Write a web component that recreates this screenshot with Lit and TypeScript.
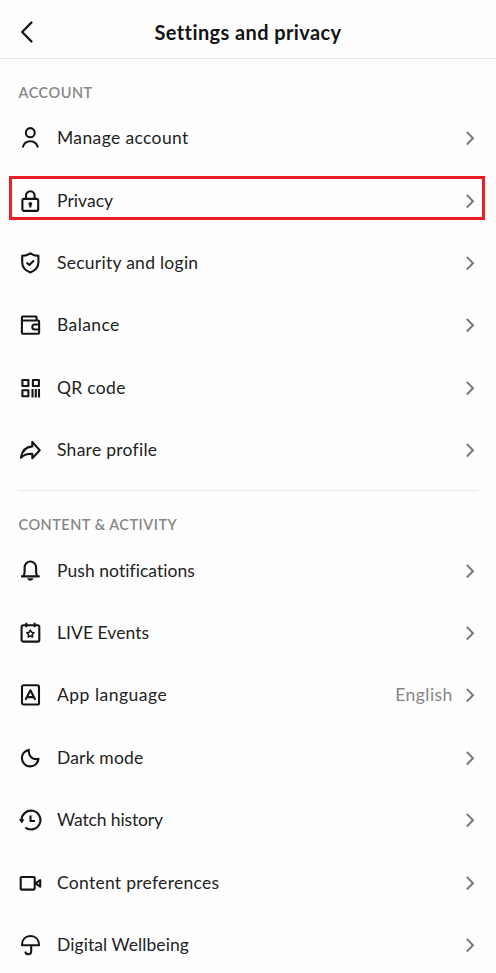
import { LitElement, html, svg, css, nothing, TemplateResult } from "lit";
import { customElement, property } from "lit/decorators.js";

const icons: Record<string, TemplateResult> = {
  person: svg`<ellipse cx="12.3" cy="6.7" rx="4.4" ry="4.6"/><path d="M4.7 21.6C5.7 17.5 8.5 15.3 12.3 15.3s6.6 2.2 7.6 6.3"/>`,
  lock: svg`<rect x="4.4" y="9.9" width="15.8" height="12" rx="1.6"/><path d="M8 9.8V6.5a4.3 4.3 0 0 1 8.6 0V9.8M12.3 15.3v3.2"/><circle class="fill" cx="12.3" cy="14.8" r="1.9"/>`,
  shield: svg`<path d="M12.3 2.3C9.7 4 7.1 4.7 4.2 4.9V11.5c0 5 2.9 8 8.1 9.9c5.2-1.9 8.1-4.9 8.1-9.9V4.9C17.5 4.7 14.9 4 12.3 2.3Z"/><path d="M8.6 11.4l2.7 2.6 4.6-4.5"/>`,
  wallet: svg`<path d="M18.6 7.5V4.5a1 1 0 0 0-1-1H4.9a1 1 0 0 0-1 1V19.7a1 1 0 0 0 1 1H20.1a1 1 0 0 0 1-1V8.5a1 1 0 0 0-1-1H4M21 11.5H16.8a2.5 2.5 0 0 0 0 5h4.2"/>`,
  qr: svg`<path d="M4.4 4h6v6H4.4zM14.9 4h6v6H14.9zM4.4 14.2h6v6H4.4zM14.5 13.1v8.3M17.8 13.1v8.3M21 13.1v8.3"/>`,
  share: svg`<path d="M14.3 3.9L21.7 12.2L14.3 20.2V15.8C9.5 15.6 6 16.5 2.9 19.7C3.9 13 8 8.9 14.3 8.4Z"/>`,
  bell: svg`<path d="M3 17.4H21.7M5.7 17.2l.9-4V8.5a5.7 6 0 0 1 11.5 0v4.7l.9 4"/><path class="fill" d="M9.2 19.3h6.3c-.5 1.6-1.6 2.4-3.15 2.4s-2.65-.8-3.15-2.4z"/>`,
  calendar: svg`<rect x="3.6" y="4.3" width="17.7" height="16.3" rx="1.6"/><path d="M8.3 1.7V6.3M16.6 1.7V6.3"/><path class="thin" d="M12.4 9l1.1 2.3 2.5.4-1.8 1.8.4 2.6-2.2-1.2-2.2 1.2.4-2.6-1.8-1.8 2.5-.4z"/>`,
  language: svg`<rect x="4" y="2.2" width="17" height="19.3" rx="1.6"/><path d="M7.5 16.8L12.4 7.3L17.3 16.8M9.5 14.1h6"/>`,
  moon: svg`<path d="M10.9 3.9A8.3 8.3 0 1 0 20.5 12.9C14.6 14 10 10.2 10.9 3.9Z"/>`,
  history: svg`<path d="M3.6 12.3A9.4 9.4 0 1 1 7.4 19.6M12.5 7.5V13H17"/><path class="fill" d="M.9 11.2h5.6l-2.7 4.2z"/>`,
  camera: svg`<rect x="2.7" y="6" width="14" height="12.6" rx="1"/><path d="M17.5 12.3L22.2 9V15.7Z"/>`,
  umbrella: svg`<path d="M4 12.2C4 6.5 7.5 3 12.5 3S21 6.5 21 12.2ZM13.2 12.2V18a2.9 2.9 0 0 1-5.8.7"/>`,
};

@customElement("settings-row")
export class SettingsRow extends LitElement {
  @property() icon = "";
  @property() label = "";
  @property() value = "";
  @property({ type: Number }) tracking = 0;

  static styles = css`
    :host { display: flex; align-items: center; height: 62.45px; padding: 0 20.2px 0 18px; }
    .icon { width: 24px; height: 24px; flex: none; fill: none; stroke: #141414; stroke-width: 2.1; stroke-linejoin: round; }
    .fill { fill: #141414; stroke: none; }
    .thin { stroke-width: 1.5; }
    .label { flex: 1; margin-left: 15px; color: #222; white-space: nowrap; }
    .value { color: #858585; letter-spacing: 0.45px; margin-right: 11px; }
    .chevron { width: 12px; height: 16px; flex: none; fill: none; stroke: #7a7a7a; stroke-width: 2; }
  `;

  render() {
    return html`
      <svg class="icon" viewBox="0 0 24 24">${icons[this.icon]}</svg>
      <span class="label" style="letter-spacing:${this.tracking}px">${this.label}</span>
      ${this.value ? html`<span class="value">${this.value}</span>` : nothing}
      <svg class="chevron" viewBox="0 0 12 16"><path d="M2.8 1.9L9 8.2L2.8 14.5"/></svg>
    `;
  }
}

interface Row { icon: string; label: string; tracking: number; value?: string; marked?: boolean }

const account: Row[] = [
  { icon: "person", label: "Manage account", tracking: 0.37 },
  { icon: "lock", label: "Privacy", tracking: 0.05, marked: true },
  { icon: "shield", label: "Security and login", tracking: 0.27 },
  { icon: "wallet", label: "Balance", tracking: 0.4 },
  { icon: "qr", label: "QR code", tracking: 0.3 },
  { icon: "share", label: "Share profile", tracking: 0.27 },
];

const activity: Row[] = [
  { icon: "bell", label: "Push notifications", tracking: 0.05 },
  { icon: "calendar", label: "LIVE Events", tracking: 0.05 },
  { icon: "language", label: "App language", tracking: 0.5, value: "English" },
  { icon: "moon", label: "Dark mode", tracking: 0.17 },
  { icon: "history", label: "Watch history", tracking: -0.13 },
  { icon: "camera", label: "Content preferences", tracking: 0.28 },
  { icon: "umbrella", label: "Digital Wellbeing", tracking: 0.07 },
];

@customElement("app-root")
export class AppRoot extends LitElement {
  static styles = css`
    :host { display: block; height: 973px; overflow: hidden; background: #fefefe; font: 17.5px/24px Lato, "Open Sans", sans-serif; }
    .header { display: grid; grid-template-columns: 60px 1fr 60px; align-items: center; height: 59px; padding-top: 6px; box-sizing: border-box; border-bottom: 1px solid #e8e8e8; }
    .back { width: 16px; height: 24px; margin-left: 19px; fill: none; stroke: #141414; stroke-width: 2.3; stroke-linecap: round; stroke-linejoin: round; }
    .title { margin: 0; text-align: center; font-size: 20px; font-weight: 700; color: #141414; letter-spacing: 0.4px; white-space: nowrap; }
    .section { margin: 0; padding: 21.5px 0 2.4px 18.5px; font-size: 14.5px; font-weight: 600; color: #868686; letter-spacing: 0.5px; }
    .divider { height: 1px; margin: 8.1px 18px 0; background: #ebebeb; }
    .divider + .section { padding: 21.9px 0 2.8px 18.5px; }
    .marked { position: relative; }
    .marked::after { content: ""; position: absolute; left: 9px; right: 11px; top: 7px; height: 44px; box-sizing: border-box; border: 3px solid #ed1c24; }
  `;

  private rows(items: Row[]) {
    return items.map((r) => html`<settings-row class=${r.marked ? "marked" : ""} .icon=${r.icon} .label=${r.label} .value=${r.value ?? ""} .tracking=${r.tracking}></settings-row>`);
  }

  render() {
    return html`
      <header class="header">
        <svg class="back" viewBox="0 0 16 24"><path d="M12.5 2.5L3.2 12L12.5 21.5"/></svg>
        <h1 class="title">Settings and privacy</h1>
      </header>
      <h2 class="section">ACCOUNT</h2>
      ${this.rows(account)}
      <div class="divider"></div>
      <h2 class="section">CONTENT &amp; ACTIVITY</h2>
      ${this.rows(activity)}
    `;
  }
}
